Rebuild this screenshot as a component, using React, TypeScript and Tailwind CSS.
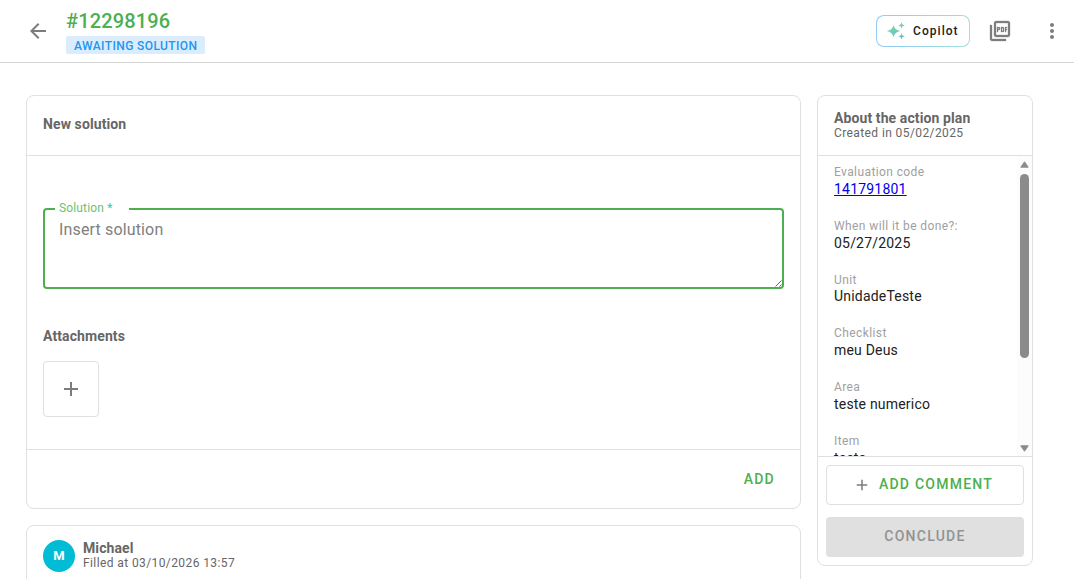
import type { ReactNode } from "react";
import { MdAdd, MdArrowBack, MdMoreVert, MdOutlinePictureAsPdf } from "react-icons/md";

interface PlanField {
  label: string;
  value: string;
  link?: boolean;
}

const planFields: PlanField[] = [
  { label: "Evaluation code", value: "141791801", link: true },
  { label: "When will it be done?:", value: "05/27/2025" },
  { label: "Unit", value: "UnidadeTeste" },
  { label: "Checklist", value: "meu Deus" },
  { label: "Area", value: "teste numerico" },
  { label: "Item", value: "teste" },
];

const CopilotIcon = () => (
  <svg width="18" height="18" viewBox="0 0 18 18" className="-ml-px overflow-visible">
    <defs>
      <linearGradient id="spark" x1="0" y1="0" x2="1" y2="1">
        <stop offset="0" stopColor="#80dca0" />
        <stop offset="1" stopColor="#5cbccb" />
      </linearGradient>
    </defs>
    <path
      fill="url(#spark)"
      d="M6.5 3.2Q7.8 8 13.2 9.1 7.8 10.2 6.5 15 5.2 10.2-.2 9.1 5.2 8 6.5 3.2ZM14.5 .3l.9 2.2 2.5.9-2.5.9L14.5 6.5l-.9-2.2-2.5-.9 2.5-.9ZM14.5 11.2l.9 2.2 2.5.9-2.5.9-.9 2.2-.9-2.2-2.5-.9 2.5-.9Z"
    />
  </svg>
);

const Card = ({ children }: { children: ReactNode }) => (
  <section className="shrink-0 rounded-lg border border-[#e0e0e0] bg-white">{children}</section>
);

const Header = () => (
  <header className="flex h-[63px] shrink-0 items-center border-b border-[#d5d5d5] pl-[26px] pr-[10px]">
    <button className="text-[#7c7c7c]">
      <MdArrowBack size={24} />
    </button>
    <div className="ml-4 flex flex-col items-start">
      <h1 className="text-xl leading-6 font-medium tracking-[0.15px] text-[#4caf50]">#12298196</h1>
      <span className="mt-[3px] flex h-[18px] items-center rounded-xs bg-[#dbedfd] px-2 pt-0.5 text-xs font-medium tracking-[0.4px] text-[#2196f3]">
        AWAITING SOLUTION
      </span>
    </div>
    <button className="ml-auto flex h-8 w-[94px] rounded-lg bg-linear-to-r from-[#90caf9] to-[#a0dfd5] p-px">
      <span className="flex h-full w-full items-center rounded-[7px] bg-white pl-[11px] text-xs font-medium tracking-[1.05px] text-[#212121]">
        <CopilotIcon />
        <span className="ml-2">Copilot</span>
      </span>
    </button>
    <button className="ml-[18px] text-[#7e7e7e]">
      <MdOutlinePictureAsPdf size={24} strokeWidth={0.3} className="[&>path:first-child]:hidden" />
    </button>
    <button className="ml-7 text-[#7c7c7c]">
      <MdMoreVert size={24} />
    </button>
  </header>
);

const NewSolution = () => (
  <Card>
    <div className="flex h-[60px] items-center border-b border-[#e0e0e0] px-4 pb-[3px]">
      <h2 className="text-sm font-bold tracking-[0.1px] text-[#666]">New solution</h2>
    </div>
    <div className="h-[294px] border-b border-[#e0e0e0] px-4 pt-[52px]">
      <div className="relative h-[81px] rounded-sm border-2 border-[#4caf50] px-3.5 pt-[8px] text-base leading-6 tracking-[0.15px] text-[#808080]">
        <label className="absolute -top-2.5 left-2.5 w-[74px] bg-white pl-1 text-xs leading-4 tracking-[0.15px] text-[#70bf73]">
          Solution <span className="text-[#3fc29a]">*</span>
        </label>
        Insert solution
        <svg className="absolute right-0 bottom-0" width="7" height="7" viewBox="0 0 7 7">
          <path d="M0.5 6.5 6.5 0.5M4.5 6.5 6.5 4.5" stroke="#555" strokeWidth="0.9" />
        </svg>
      </div>
      <h3 className="mt-[37px] text-sm leading-5 font-bold tracking-[0.1px] text-[#666]">Attachments</h3>
      <button className="mt-[15px] flex size-14 items-center justify-center rounded-sm border border-[#e0e0e0] text-[#7c7c7c]">
        <MdAdd size={24} />
      </button>
    </div>
    <div className="flex h-[58px] items-center justify-end pr-[25px]">
      <button className="text-sm font-medium tracking-[1.25px] text-[#4caf50]">ADD</button>
    </div>
  </Card>
);

const HistoryEntry = () => (
  <Card>
    <div className="flex h-[60px] items-center gap-2 px-4">
      <div className="flex size-8 items-center justify-center rounded-full bg-[#00bcd4] text-[13px] font-bold text-white">
        M
      </div>
      <div className="text-[#666]">
        <p className="-mt-px text-sm leading-[15px] font-bold tracking-[0.1px]">Michael</p>
        <p className="text-xs leading-[15px] tracking-[0.4px]">Filled at 03/10/2026 13:57</p>
      </div>
    </div>
    <div className="h-40" />
  </Card>
);

const ScrollBar = () => (
  <div className="flex w-[15px] shrink-0 flex-col items-center bg-[#fcfcfc] pt-[5px] pb-[4px] text-[#8b8b8b]">
    <svg width="9" height="7" viewBox="0 0 9 7">
      <path d="M4.5 0.8 8.2 6.2H0.8Z" fill="currentColor" stroke="currentColor" strokeLinejoin="round" />
    </svg>
    <div className="mt-1.5 h-[184px] w-[9px] rounded-full bg-[#8b8b8b]" />
    <svg className="mt-auto" width="9" height="7" viewBox="0 0 9 7">
      <path d="M4.5 6.2 8.2 0.8H0.8Z" fill="currentColor" stroke="currentColor" strokeLinejoin="round" />
    </svg>
  </div>
);

const ActionPlan = () => (
  <aside className="h-[471px] w-[216px] shrink-0 overflow-hidden rounded-lg border border-[#e0e0e0]">
    <div className="flex h-[60px] flex-col justify-center border-b border-[#e0e0e0] px-4 text-[#666]">
      <h2 className="text-sm leading-[15px] font-bold tracking-[0.1px]">About the action plan</h2>
      <p className="text-xs leading-[14px] tracking-[0.4px]">Created in 05/02/2025</p>
    </div>
    <div className="flex h-[301px] overflow-hidden border-b border-[#e0e0e0]">
      <dl className="flex-1 px-4 pt-2">
        {planFields.map(({ label, value, link }) => (
          <div key={label} className="h-[53.75px]">
            <dt className="text-xs leading-4 tracking-[0.4px] text-[#a0a0a0]">{label}</dt>
            <dd className="-mt-[0.1px] text-sm leading-[19px] tracking-[0.2px] text-[#212121]">
              {link ? <a className="text-[#0000ee] underline">{value}</a> : value}
            </dd>
          </div>
        ))}
      </dl>
      <ScrollBar />
    </div>
    <div className="flex flex-col gap-3 p-2 text-sm font-medium tracking-[1.25px]">
      <button className="flex h-10 items-center justify-center gap-2 rounded-sm border border-[#e0e0e0] pr-1 text-[#4caf50]">
        <MdAdd size={18} className="text-[#7c7c7c]" />
        <span className="pb-0.5">ADD COMMENT</span>
      </button>
      <button className="h-10 rounded-sm bg-[#e0e0e0] pb-0.5 text-[#929292]">CONCLUDE</button>
    </div>
  </aside>
);

export default function App() {
  return (
    <div className="flex h-[579px] w-[1074px] flex-col overflow-hidden bg-white font-[Roboto,sans-serif]">
      <Header />
      <main className="flex min-h-0 flex-1 items-start gap-4 overflow-hidden pt-8 pl-[26px]">
        <div className="flex w-[775px] flex-col gap-4">
          <NewSolution />
          <HistoryEntry />
        </div>
        <ActionPlan />
      </main>
    </div>
  );
}
